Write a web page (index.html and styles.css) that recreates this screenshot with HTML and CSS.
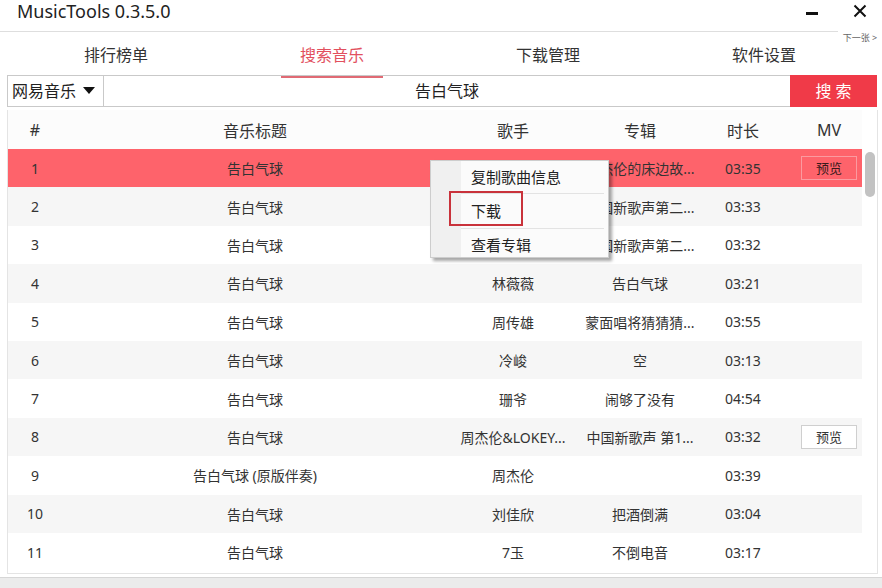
FILE: index.html
```html
<!DOCTYPE html>
<html lang="zh-CN">
<head>
    <meta charset="UTF-8">
    <meta name="viewport" content="width=device-width, initial-scale=1.0">
    <title>MusicTools 0.3.5.0</title>
    <link rel="stylesheet" href="styles.css">
</head>
<body>
    <div class="mt-titlebar">
        <div class="mt-title">MusicTools 0.3.5.0</div>
        <div class="mt-win-controls">
            <span class="mt-win-min"></span>
            <svg class="mt-win-close" width="14" height="14" viewBox="0 0 14 14">
                <path d="M1.5 1.5 L12.5 12.5 M12.5 1.5 L1.5 12.5" stroke="#111" stroke-width="2" fill="none"/>
            </svg>
        </div>
    </div>

    <div class="mt-next">下一张 &gt;</div>

    <div class="mt-panel">
        <div class="mt-tabs">
            <div class="mt-tab">排行榜单</div>
            <div class="mt-tab active">搜索音乐</div>
            <div class="mt-tab">下载管理</div>
            <div class="mt-tab">软件设置</div>
        </div>

        <div class="mt-search">
            <div class="mt-source">网易音乐 <span class="mt-caret"></span></div>
            <div class="mt-input">告白气球</div>
            <div class="mt-search-btn">搜 索</div>
        </div>

        <div class="mt-list">
            <div class="mt-table">
                <div class="mt-row mt-head">
                    <div class="c-no">#</div>
                    <div class="c-title">音乐标题</div>
                    <div class="c-singer">歌手</div>
                    <div class="c-album">专辑</div>
                    <div class="c-time">时长</div>
                    <div class="c-mv">MV</div>
                </div>
                <!-- singer cells of rows 1-3 sit under the context menu -->
                <div class="mt-row selected">
                    <div class="c-no">1</div>
                    <div class="c-title">告白气球</div>
                    <div class="c-singer"></div>
                    <div class="c-album">周杰伦的床边故...</div>
                    <div class="c-time">03:35</div>
                    <div class="c-mv"><span class="mt-mv-btn">预览</span></div>
                </div>
                <div class="mt-row">
                    <div class="c-no">2</div>
                    <div class="c-title">告白气球</div>
                    <div class="c-singer"></div>
                    <div class="c-album">中国新歌声第二...</div>
                    <div class="c-time">03:33</div>
                    <div class="c-mv"></div>
                </div>
                <div class="mt-row">
                    <div class="c-no">3</div>
                    <div class="c-title">告白气球</div>
                    <div class="c-singer"></div>
                    <div class="c-album">中国新歌声第二...</div>
                    <div class="c-time">03:32</div>
                    <div class="c-mv"></div>
                </div>
                <div class="mt-row">
                    <div class="c-no">4</div>
                    <div class="c-title">告白气球</div>
                    <div class="c-singer">林薇薇</div>
                    <div class="c-album">告白气球</div>
                    <div class="c-time">03:21</div>
                    <div class="c-mv"></div>
                </div>
                <div class="mt-row">
                    <div class="c-no">5</div>
                    <div class="c-title">告白气球</div>
                    <div class="c-singer">周传雄</div>
                    <div class="c-album">蒙面唱将猜猜猜...</div>
                    <div class="c-time">03:55</div>
                    <div class="c-mv"></div>
                </div>
                <div class="mt-row">
                    <div class="c-no">6</div>
                    <div class="c-title">告白气球</div>
                    <div class="c-singer">冷峻</div>
                    <div class="c-album">空</div>
                    <div class="c-time">03:13</div>
                    <div class="c-mv"></div>
                </div>
                <div class="mt-row">
                    <div class="c-no">7</div>
                    <div class="c-title">告白气球</div>
                    <div class="c-singer">珊爷</div>
                    <div class="c-album">闹够了没有</div>
                    <div class="c-time">04:54</div>
                    <div class="c-mv"></div>
                </div>
                <div class="mt-row">
                    <div class="c-no">8</div>
                    <div class="c-title">告白气球</div>
                    <div class="c-singer">周杰伦&amp;LOKEY...</div>
                    <div class="c-album">中国新歌声 第1...</div>
                    <div class="c-time">03:32</div>
                    <div class="c-mv"><span class="mt-mv-btn">预览</span></div>
                </div>
                <div class="mt-row">
                    <div class="c-no">9</div>
                    <div class="c-title">告白气球 (原版伴奏)</div>
                    <div class="c-singer">周杰伦</div>
                    <div class="c-album"></div>
                    <div class="c-time">03:39</div>
                    <div class="c-mv"></div>
                </div>
                <div class="mt-row">
                    <div class="c-no">10</div>
                    <div class="c-title">告白气球</div>
                    <div class="c-singer">刘佳欣</div>
                    <div class="c-album">把酒倒满</div>
                    <div class="c-time">03:04</div>
                    <div class="c-mv"></div>
                </div>
                <div class="mt-row">
                    <div class="c-no">11</div>
                    <div class="c-title">告白气球</div>
                    <div class="c-singer">7玉</div>
                    <div class="c-album">不倒电音</div>
                    <div class="c-time">03:17</div>
                    <div class="c-mv"></div>
                </div>
            </div>
            <div class="mt-scrollbar"><div class="mt-thumb"></div></div>
        </div>
    </div>

    <div class="mt-footer"></div>

    <!-- right click menu on row 1 -->
    <div class="mt-menu">
        <div class="mt-menu-item">复制歌曲信息</div>
        <div class="mt-menu-item picked"><span class="mt-mark">下载</span></div>
        <div class="mt-menu-item">查看专辑</div>
    </div>
</body>
</html>
```

FILE: styles.css
```css
body {
    margin: 0;
    width: 882px;
    height: 588px;
    overflow: hidden;
    position: relative;
    background-color: #fff;
    color: #333;
    font-family: "Noto Sans", "Noto Sans CJK SC", sans-serif;
}

.mt-titlebar {
    height: 31px;
    display: flex;
    align-items: flex-start;
    padding-left: 17px;
}

.mt-title {
    font-size: 18px;
    line-height: 24px;
    margin-top: -1px;
    color: #222;
}

.mt-win-controls {
    margin-left: auto;
    display: flex;
    align-items: flex-start;
    padding-top: 4px;
    padding-right: 15px;
}

.mt-win-min {
    display: block;
    width: 12px;
    height: 3px;
    margin-top: 8px;
    margin-right: 35px;
    background-color: #111;
}

.mt-next {
    position: absolute;
    top: 28px;
    left: 838px;
    width: 44px;
    height: 19px;
    background-color: #fff;
    font-size: 9px;
    line-height: 19px;
    color: #666;
    white-space: nowrap;
    text-align: center;
}

.mt-panel {
    border-top: 1px solid #dedede;
}

.mt-tabs {
    display: grid;
    grid-template-columns: repeat(4, 216px);
    margin-left: 8px;
    height: 40px;
}

.mt-tab {
    position: relative;
    text-align: center;
    font-size: 16px;
    line-height: 46px;
    color: #333;
}

.mt-tab.active {
    color: #e2505e;
}

.mt-tab.active::after {
    content: "";
    position: absolute;
    left: 57px;
    bottom: 0;
    width: 102px;
    height: 2px;
    background-color: #e06a74;
}

.mt-search {
    display: flex;
    height: 32px;
    margin: 3px 5px 0 7px;
}

.mt-source {
    width: 97px;
    border: 1px solid #c9c9c9;
    box-sizing: border-box;
    padding-left: 4px;
    font-size: 16px;
    line-height: 30px;
    color: #222;
}

.mt-caret {
    display: inline-block;
    width: 0;
    height: 0;
    margin-left: 3px;
    border-left: 6px solid transparent;
    border-right: 6px solid transparent;
    border-top: 7px solid #111;
    vertical-align: 3px;
}

.mt-input {
    flex: 1;
    border-top: 1px solid #c9c9c9;
    border-bottom: 1px solid #c9c9c9;
    text-align: center;
    font-size: 16px;
    line-height: 30px;
    color: #222;
}

.mt-search-btn {
    width: 87px;
    background-color: #f03a48;
    color: #fff;
    font-size: 16px;
    line-height: 32px;
    text-align: center;
}

.mt-list {
    display: flex;
    margin: 3px 4px 0 7px;
    height: 463px;
    border: 1px solid #e4e4e4;
    border-top: none;
}

.mt-table {
    width: 854px;
}

.mt-row {
    display: grid;
    grid-template-columns: 54px 386px 130px 124px 82px 78px;
    height: 38.4px;
    align-items: center;
    font-size: 14px;
    white-space: nowrap;
}

.mt-row > div {
    text-align: center;
    overflow: hidden;
}

.mt-row:nth-child(odd) {
    background-color: #f6f6f6;
}

.mt-row.mt-head {
    height: 39px;
    font-size: 16px;
    background-color: #fcfcfc;
    color: #333;
}

.mt-row.selected {
    background-color: #fe636b;
}

.mt-row .c-mv {
    padding-left: 12px;
}

.mt-mv-btn {
    display: inline-block;
    width: 54px;
    height: 22px;
    line-height: 22px;
    font-size: 13px;
    border: 1px solid #cfcfcf;
    background-color: #fff;
    color: #333;
}

.selected .mt-mv-btn {
    background-color: transparent;
    border-color: #fb9aa0;
    color: #3a1a1c;
}

.mt-scrollbar {
    flex: 1;
    padding-top: 42px;
    padding-left: 3px;
}

.mt-thumb {
    width: 10px;
    height: 45px;
    border-radius: 5px;
    background-color: #c2c2c2;
}

.mt-footer {
    margin-top: 3px;
    height: 12px;
    border-top: 1px solid #d6d6d6;
    background-color: #ebebeb;
}

.mt-menu {
    position: absolute;
    left: 430px;
    top: 160px;
    width: 177px;
    height: 96px;
    border: 1px solid #cdcdcd;
    background: linear-gradient(to right, #f0f0f0 30px, #fbfbfb 30px);
    box-shadow: 3px 3px 3px rgba(0, 0, 0, 0.35);
}

.mt-menu-item {
    margin-left: 30px;
    margin-right: 4px;
    height: 32px;
    font-size: 15px;
    line-height: 32px;
    padding-left: 10px;
    color: #222;
    border-bottom: 1px solid #e3e3e3;
}

.mt-menu-item.picked {
    height: 34px;
    line-height: 34px;
}

.mt-menu-item:last-child {
    border-bottom: none;
}

.mt-mark {
    position: relative;
}

.mt-mark::before {
    content: "";
    position: absolute;
    left: -22px;
    top: -10px;
    width: 70px;
    height: 31px;
    border: 2px solid #c9323b;
}
```
